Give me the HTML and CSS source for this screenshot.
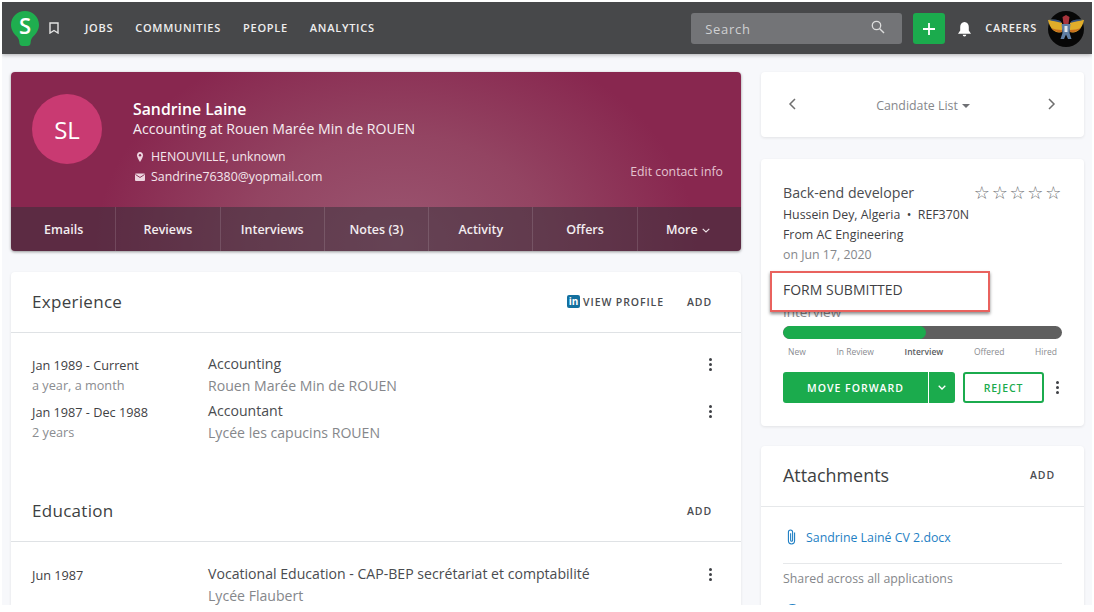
FILE: index.html
```html
<!DOCTYPE html>
<html lang="en">
<head>
<meta charset="utf-8">
<title>Sandrine Laine</title>
<link rel="stylesheet" href="styles.css">
</head>
<body>
<div class="screen">
  <header class="nav">
    <div class="logo">
      <svg viewBox="0 0 28 35"><path d="M14 0C6.300 0 0 6.100 0 13.700c0 5 2.600 8.600 5.600 11.600 2 2 2.600 4 2.800 6.600.1 1.800 1.400 3.100 3.100 3.100h5c1.700 0 3-1.300 3.100-3.100.2-2.600.8-4.600 2.800-6.600 3-3 5.600-6.600 5.600-11.600C28 6.100 21.700 0 14 0z" fill="#1fae4f"/></svg>
      <span class="logo-s">S</span>
    </div>
    <svg class="bookmark" viewBox="0 0 10 12"><path d="M1 1h8v10L5 8.500 1 11z" fill="none" stroke="#e4e4e4" stroke-width="1.400"/></svg>
    <nav class="nav-links"><a>JOBS</a><a>COMMUNITIES</a><a>PEOPLE</a><a>ANALYTICS</a></nav>
    <div class="search"><span>Search</span>
      <svg viewBox="0 0 14 14" class="search-icon"><circle cx="5.500" cy="5.500" r="4.200" fill="none" stroke="#dcdcdc" stroke-width="1.300"/><path d="M8.700 8.700L13 13" stroke="#dcdcdc" stroke-width="1.400"/></svg>
    </div>
    <div class="plus"><svg viewBox="0 0 14 14"><path d="M7 1v12M1 7h12" stroke="#fff" stroke-width="1.800"/></svg></div>
    <svg class="bell" viewBox="0 0 15 16"><path d="M7.500 1C4.800 1 3.200 3.200 3.200 6v3.500L1 12.800h13L11.800 9.500V6C11.800 3.200 10.200 1 7.500 1z" fill="#fff"/><path d="M5.700 13.700h3.600a1.800 1.800 0 0 1-3.600 0z" fill="#fff"/></svg>
    <span class="careers">CAREERS</span>
    <svg class="user" viewBox="0 0 36 36"><circle cx="18" cy="18" r="18" fill="#070707"/><path d="M0 9c6-1 11 0 14 3v9c-7 2-12-3-14-12zM36 9c-6-1-11 0-14 3v9c7 2 12-3 14-12z" fill="#e0ad2a"/><path d="M3 17c3 3 7 5 11 4v-2c-4 0-8-1-11-2zM33 17c-3 3-7 5-11 4v-2c4 0 8-1 11-2z" fill="#c8701f"/><path d="M1 9c4-.8 9-.5 12 1.500l.3 1.300C9 10.400 4 10 1 9zM35 9c-4-.8-9-.5-12 1.500l-.3 1.300c4.300-1.400 9.300-1.800 12.300-2.800z" fill="#35527f"/><path d="M14.500 6l3.500-2 3.500 2-1 7h-5z" fill="#a8343c"/><path d="M13.500 13h9l-1 9 2 6h-3.500L18 23.500 16 28h-3.500l2-6z" fill="#5f7ea3"/><rect x="16.500" y="15" width="3" height="6" fill="#dfe5ea"/></svg>
  </header>

  <main class="content">
    <div class="left">
      <section class="hero">
        <div class="hero-top">
          <div class="avatar">SL</div>
          <div class="hero-info">
            <div class="name">Sandrine Laine</div>
            <div class="role">Accounting at Rouen Marée Min de ROUEN</div>
            <div class="contact contact-first">
              <svg viewBox="0 0 10 12"><path d="M5 1C3.100 1 2 2.500 2 4.300 2 6.700 5 11 5 11s3-4.300 3-6.700C8 2.500 6.900 1 5 1z" fill="#edd5df"/><circle cx="5" cy="4.300" r="1.200" fill="#8a2c54"/></svg>
              HENOUVILLE, unknown</div>
            <div class="contact">
              <svg viewBox="0 0 10 12"><rect x="0" y="2.500" width="10" height="7.500" rx="1" fill="#edd5df"/><path d="M.5 3.500L5 6.500l4.500-3" fill="none" stroke="#8f3a5e" stroke-width="1"/></svg>
              Sandrine76380@yopmail.com</div>
          </div>
          <a class="edit">Edit contact info</a>
        </div>
        <div class="tabs">
          <a>Emails</a><a>Reviews</a><a>Interviews</a><a>Notes (3)</a><a>Activity</a><a>Offers</a>
          <a>More <svg viewBox="0 0 8 5" class="tab-chev"><path d="M.7.800L4 4 7.300.800" fill="none" stroke="#f0e6ea" stroke-width="1.100"/></svg></a>
        </div>
      </section>

      <section class="card main-card">
        <div class="card-head">
          <h2>Experience</h2>
          <div class="head-actions">
            <a class="action"><span class="in">in</span>VIEW PROFILE</a>
            <a class="action">ADD</a>
          </div>
        </div>
        <div class="rows rows-exp">
          <div class="row">
            <div class="dates"><div>Jan 1989 - Current</div><div class="muted">a year, a month</div></div>
            <div class="detail"><div class="dt">Accounting</div><div class="dd">Rouen Marée Min de ROUEN</div></div>
            <div class="kebab"><i></i><i></i><i></i></div>
          </div>
          <div class="row">
            <div class="dates"><div>Jan 1987 - Dec 1988</div><div class="muted">2 years</div></div>
            <div class="detail"><div class="dt">Accountant</div><div class="dd">Lycée les capucins ROUEN</div></div>
            <div class="kebab"><i></i><i></i><i></i></div>
          </div>
        </div>
        <div class="card-head">
          <h2>Education</h2>
          <div class="head-actions"><a class="action">ADD</a></div>
        </div>
        <div class="rows rows-edu">
          <div class="row">
            <div class="dates"><div>Jun 1987</div></div>
            <div class="detail"><div class="dt">Vocational Education - CAP-BEP secrétariat et comptabilité</div><div class="dd">Lycée Flaubert</div></div>
            <div class="kebab"><i></i><i></i><i></i></div>
          </div>
        </div>
      </section>
    </div>

    <aside class="right">
      <section class="card pager">
        <svg viewBox="0 0 8 12" class="arrow"><path d="M6.500 1L1.500 6l5 5" fill="none" stroke="#6f6f6f" stroke-width="1.500"/></svg>
        <span class="pager-label">Candidate List <i class="caret"></i></span>
        <svg viewBox="0 0 8 12" class="arrow"><path d="M1.500 1l5 5-5 5" fill="none" stroke="#6f6f6f" stroke-width="1.500"/></svg>
      </section>

      <section class="card job">
        <div class="job-top">
          <div class="job-title">Back-end developer</div>
          <div class="stars">☆☆☆☆☆</div>
        </div>
        <div class="job-line job-line-first">Hussein Dey, Algeria &nbsp;•&nbsp; REF370N</div>
        <div class="job-line">From AC Engineering</div>
        <div class="job-line job-date">on Jun 17, 2020</div>
        <div class="stage">Interview</div>
        <div class="highlight">FORM SUBMITTED</div>
        <div class="progress"><div class="progress-fill"></div></div>
        <div class="steps"><span>New</span><span>In Review</span><span class="on">Interview</span><span>Offered</span><span>Hired</span></div>
        <div class="buttons">
          <a class="btn-forward">MOVE FORWARD</a>
          <a class="btn-drop"><svg viewBox="0 0 8 5"><path d="M.7.800L4 4 7.300.800" fill="none" stroke="#fff" stroke-width="1.300"/></svg></a>
          <a class="btn-reject">REJECT</a>
          <div class="kebab kebab-job"><i></i><i></i><i></i></div>
        </div>
      </section>

      <section class="card attach">
        <div class="attach-head"><h2>Attachments</h2><a class="action">ADD</a></div>
        <div class="attach-body">
          <a class="file">
            <svg viewBox="0 0 10 16"><path d="M7.800 4v7.500a2.800 2.800 0 0 1-5.600 0V3.500a1.900 1.900 0 0 1 3.800 0V11a.9.900 0 0 1-1.800 0V4.500" fill="none" stroke="#1f7fc4" stroke-width="1"/></svg>
            Sandrine Lainé CV 2.docx</a>
          <div class="shared">Shared across all applications</div>
          <div class="dot"></div>
        </div>
      </section>
    </aside>
  </main>
</div>
</body>
</html>
```
FILE: styles.css
```css
* { box-sizing: border-box; }
html, body { margin: 0; background: #fff; }
body { font-family: "Open Sans", "Noto Sans", sans-serif; color: #3f4144; }
h2 { margin: 0; font-weight: 400; font-size: 17px; letter-spacing: .3px; color: #3d3f42; }
a { display: block; }

.screen { margin: 2px 2px 0; width: 1090px; height: 603px; overflow: hidden; background: #f7f8fb; display: flex; flex-direction: column; }

/* top bar */
.nav { height: 52px; flex: none; background: #47484a; display: flex; align-items: center; padding: 0 8px 0 9px; box-shadow: 0 1px 4px rgba(0,0,0,.3); position: relative; }
.logo { width: 28px; height: 35px; margin-top: 0; flex: none; position: relative; }
.logo svg { display: block; width: 28px; height: 35px; }
.logo-s { position: absolute; left: 0; right: 0; top: 0; text-align: center; font-size: 22px; line-height: 29px; font-weight: 600; color: #fff; }
.bookmark { width: 10px; height: 12px; margin-left: 10px; flex: none; }
.nav-links { display: flex; gap: 22px; margin: 0 0 2px 26px; flex: 1; }
.nav-links a { font-size: 11px; font-weight: 600; letter-spacing: .73px; color: #eee; }
.search { width: 211px; height: 31px; margin-top: 1px; background: #737477; border-radius: 3px; display: flex; align-items: center; justify-content: space-between; padding: 0 17px 0 14px; font-size: 13px; letter-spacing: .7px; color: #cfd0d2; }
.search-icon { width: 14px; height: 14px; margin-top: -4px; }
.plus { width: 32px; height: 31px; margin: 1px 0 0 11px; background: #1bab4d; border-radius: 3px; display: flex; align-items: center; justify-content: center; }
.plus svg { width: 14px; height: 14px; }
.bell { width: 15px; height: 16px; margin: 2px 0 0 12px; }
.careers { font-size: 11px; font-weight: 600; letter-spacing: .73px; color: #eee; margin: 0 0 2px 13px; }
.user { width: 36px; height: 36px; margin: 1px 0 0 11px; flex: none; }

/* layout */
.content { flex: 1; display: flex; gap: 20px; padding: 18px 0 0 9px; min-height: 0; }
.left { width: 730px; display: flex; flex-direction: column; gap: 21px; flex: none; min-height: 0; }
.right { width: 323px; display: flex; flex-direction: column; flex: none; min-height: 0; }
.card { background: #fff; border-radius: 4px; box-shadow: 0 1px 3px rgba(0,0,0,.09); }

/* hero */
.hero { height: 179px; flex: none; border-radius: 4px; overflow: hidden; display: flex; flex-direction: column; box-shadow: 0 1px 3px rgba(0,0,0,.4); background: radial-gradient(ellipse 300px 220px at 385px 172px, #9b5671 0%, #934462 50%, #88274f 100%); color: #fff; }
.hero-top { flex: 1; display: flex; padding: 22px 18px 0 21px; position: relative; }
.avatar { width: 70px; height: 70px; border-radius: 50%; background: #c93a72; display: flex; align-items: center; justify-content: center; font-size: 24px; color: #fff; flex: none; }
.hero-info { margin-left: 31px; padding-top: 5px; }
.name { font-size: 15.800px; font-weight: 600; line-height: 20px; }
.role { font-size: 14.100px; line-height: 20px; color: #f6edf1; }
.contact { font-size: 12.350px; line-height: 20px; color: #f4e6ec; display: flex; align-items: center; gap: 6px; padding-left: 2px; }
.contact-first { margin-top: 8px; }
.contact svg { width: 10px; height: 12px; flex: none; }
.edit { position: absolute; right: 18px; bottom: 27px; font-size: 12.300px; color: #e3c2cf; }
.tabs { height: 44px; flex: none; display: flex; background: rgba(48,48,56,.5); }
.tabs a { flex: 1; display: flex; align-items: center; justify-content: center; gap: 4px; font-size: 12.500px; font-weight: 600; color: #f3edf0; border-left: 1px solid rgba(255,255,255,.13); }
.tabs a:first-child { border-left: 0; padding-left: 1px; }
.tab-chev { width: 8px; height: 5px; margin: 2px 3px 0 0; }

/* main card */
.main-card { flex: 1; border-radius: 4px 4px 0 0; }
.card-head { height: 61px; display: flex; align-items: center; justify-content: space-between; padding: 0 29px 1px 21px; border-bottom: 1px solid #dfe2e5; }
.head-actions { display: flex; align-items: center; gap: 23px; }
.action { font-size: 10.500px; font-weight: 600; letter-spacing: .9px; color: #4a4c50; display: flex; align-items: center; }
.in { width: 13px; height: 13px; background: #13709f; border-radius: 2px; color: #fff; font-size: 10px; font-weight: 700; line-height: 12px; letter-spacing: 0; text-align: center; margin-right: 3px; }
.rows { padding: 21px 29px 0 21px; display: flex; flex-direction: column; gap: 5px; }
.rows-exp { height: 148px; }
.rows-edu { padding-top: 22px; }
.row { display: flex; align-items: flex-start; }
.dates { width: 176px; flex: none; padding-top: 1px; font-size: 12.700px; line-height: 20px; color: #3f4144; }
.muted { color: #8a8c90; }
.detail { flex: 1; }
.dt { font-size: 14.100px; line-height: 20px; color: #4a4c50; }
.dd { font-size: 14.100px; line-height: 20px; margin-top: 2px; color: #85878b; }
.kebab { display: flex; flex-direction: column; gap: 2px; width: 3px; margin: 4px 0 0; flex: none; }
.kebab i { width: 3px; height: 3px; border-radius: 50%; background: #3e4045; }

/* right rail */
.pager { height: 65px; flex: none; display: flex; align-items: center; justify-content: space-between; padding: 0 28px 0 27px; margin-bottom: 22px; }
.arrow { width: 9px; height: 12px; margin-top: -2px; }
.pager-label { font-size: 12.350px; color: #85878b; display: flex; align-items: center; gap: 4px; padding-top: 2px; margin-left: 2px; }
.caret { width: 0; height: 0; border: 4px solid transparent; border-top: 4.500px solid #6f7074; border-bottom: 0; }
.job { height: 267px; flex: none; padding: 24px 22px 0; position: relative; margin-bottom: 20px; }
.job-top { display: flex; justify-content: space-between; align-items: flex-start; }
.job-title { font-size: 14.200px; line-height: 20px; color: #4a4c50; }
.stars { font-size: 18px; line-height: 18px; letter-spacing: 1.700px; color: #6c6e72; font-family: "DejaVu Sans", sans-serif; margin-right: -1px; margin-top: 1px; }
.job-line { font-size: 12.350px; line-height: 20px; color: #3f4144; }
.job-line-first { margin-top: 2px; }
.job-date { color: #85878b; }
.stage { font-size: 13.500px; line-height: 20px; color: #8a8c90; margin-top: 37px; }
.highlight { position: absolute; left: 9px; top: 112px; width: 220px; height: 41px; background: #fff; border: 2px solid #e9625e; box-shadow: 0 2px 3px rgba(0,0,0,.45); padding: 7px 0 0 11px; font-size: 14px; line-height: 20px; color: #3f4144; }
.progress { height: 13px; border-radius: 7px; background: #5f5f5f; margin-top: 4px; overflow: hidden; }
.progress-fill { width: 143px; height: 100%; background: #1bab4d; border-radius: 7px; }
.steps { display: flex; justify-content: space-between; padding: 0 5px; font-size: 8.500px; line-height: 12px; margin-top: 7px; color: #8a8c90; }
.steps .on { color: #5b5d61; font-weight: 600; }
.buttons { display: flex; align-items: center; margin-top: 14px; height: 31px; }
.btn-forward { width: 145px; height: 31px; background: #1bab4d; border-radius: 3px 0 0 3px; color: #fff; font-size: 10.500px; font-weight: 600; letter-spacing: 1px; display: flex; align-items: center; justify-content: center; }
.btn-drop { width: 26px; height: 31px; margin-left: 1px; background: #1bab4d; border-radius: 0 3px 3px 0; display: flex; align-items: center; justify-content: center; }
.btn-drop svg { width: 8px; height: 5px; }
.btn-reject { width: 81px; height: 31px; margin-left: 8px; border: 2px solid #1bab4d; border-radius: 3px; color: #1bab4d; font-size: 10.500px; font-weight: 600; letter-spacing: .9px; display: flex; align-items: center; justify-content: center; }
.kebab-job { margin: 0 0 0 12px; }
.attach { flex: 1; border-radius: 4px 4px 0 0; }
.attach-head { height: 61px; display: flex; align-items: center; justify-content: space-between; padding: 0 29px 2px 22px; border-bottom: 1px solid #e6e8ea; }
.attach-head h2 { font-size: 17.900px; letter-spacing: 0; }
.attach-body { padding: 20px 22px 0; }
.file { display: flex; align-items: center; gap: 9px; height: 20px; padding-left: 3px; font-size: 12.350px; color: #1f7fc4; }
.file svg { width: 11px; height: 18px; }
.shared { margin-top: 16px; border-top: 1px solid #e6e8ea; padding-top: 5px; font-size: 12.350px; line-height: 20px; color: #85878b; }
.dot { width: 15px; height: 15px; border-radius: 50%; background: #1f7fc4; margin: 15px 0 0 2px; }
```
